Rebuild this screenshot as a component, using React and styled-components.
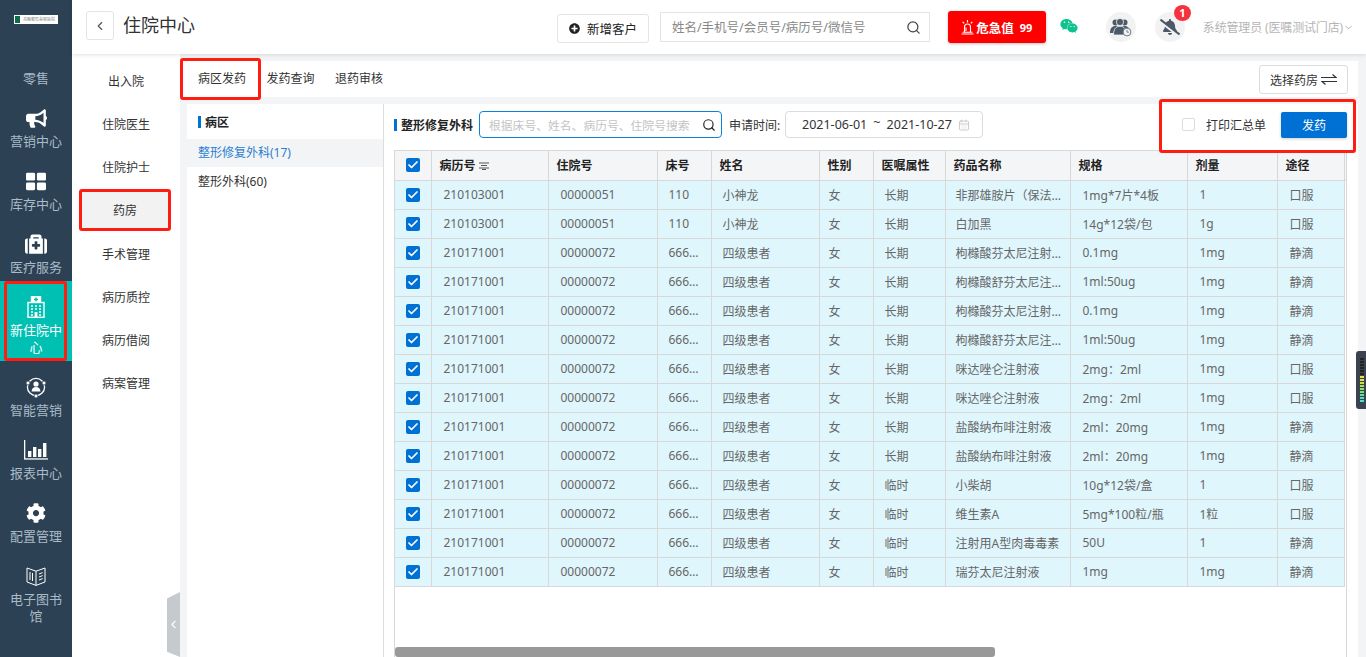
import React from 'react';
import styled, {createGlobalStyle} from 'styled-components';
import {ChevronLeft, ChevronDown, Search, CalendarDays, Check} from 'lucide-react';
import {FaBullhorn, FaMedkit, FaCog, FaWeixin, FaPlusCircle, FaBellSlash} from 'react-icons/fa';

const GlobalStyle = createGlobalStyle`
  html, body {
    margin: 0;
    padding: 0;
    height: 100%;
    overflow: hidden;
    background: #f3f4f6;
  }
  * {
    box-sizing: border-box;
  }
  body, input, button {
    font-family: 'Noto Sans', 'Noto Sans CJK SC', sans-serif;
  }
`;

const GridIcon = () => (
  <svg width="20" height="19" viewBox="0 0 22 19" fill="#fff">
    <rect x="0" y="0" width="10" height="8.5" rx="1.5" />
    <rect x="12" y="0" width="10" height="8.5" rx="1.5" />
    <rect x="0" y="10.5" width="10" height="8.5" rx="1.5" />
    <rect x="12" y="10.5" width="10" height="8.5" rx="1.5" />
  </svg>
);

const HospitalIcon = () => (
  <svg width="18" height="22" viewBox="0 0 18 22" fill="none" stroke="#fff" strokeWidth="1.4">
    <rect x="4.5" y="0.7" width="9" height="5.5" fill="#fff" />
    <path d="M9 1.5v4M7 3.5h4" stroke="#00bfb3" />
    <rect x="1" y="6.5" width="16" height="14.8" />
    <path d="M4 10h2M8 10h2M12 10h2M4 13h2M8 13h2M12 13h2M4 16h2M12 16h2M4 19h2M12 19h2" strokeWidth="1.6" />
    <rect x="7.6" y="16" width="2.8" height="5" fill="#fff" stroke="none" />
  </svg>
);

const SmartIcon = () => (
  <svg width="22" height="22" viewBox="0 0 22 22" fill="none" stroke="#fff" strokeWidth="1.3">
    <circle cx="11" cy="11" r="8.6" />
    <circle cx="11" cy="8" r="2.6" fill="#fff" stroke="none" />
    <path d="M6.5 15.5c.3-3 2-4.4 4.5-4.4s4.2 1.4 4.5 4.4z" fill="#fff" stroke="none" />
    <circle cx="3" cy="7" r="2" fill="#fff" stroke="#2c4153" strokeWidth="0.8" />
    <circle cx="19" cy="7" r="2" fill="#fff" stroke="#2c4153" strokeWidth="0.8" />
    <circle cx="11" cy="20" r="2" fill="#fff" stroke="#2c4153" strokeWidth="0.8" />
  </svg>
);

const ChartIcon = () => (
  <svg width="24" height="20" viewBox="0 0 24 20" fill="#fff">
    <rect x="0" y="0" width="1.3" height="19" />
    <rect x="0" y="18.3" width="24" height="1.3" />
    <rect x="4" y="11" width="3.4" height="6" />
    <rect x="9" y="7" width="3.4" height="10" />
    <rect x="14" y="9" width="3.4" height="8" />
    <rect x="19" y="3" width="3.4" height="14" />
  </svg>
);

const BookIcon = () => (
  <svg width="20" height="19" viewBox="0 0 20 19" fill="none" stroke="#fff" strokeWidth="1">
    <path d="M1 1l9 3.2L19 1v14l-9 3.4L1 15z" />
    <path d="M10 4.2v14.2M4 5v8M6.5 6v8M13 7l3.6-1.4M13 10l3.6-1.4M13 13l3.6-1.4" />
  </svg>
);

const AlarmIcon = () => (
  <svg width="13" height="15" viewBox="0 0 13 15" fill="none" stroke="#fff" strokeWidth="1.1">
    <path d="M3.5 12V7a3 3 0 0 1 6 0v5" />
    <path d="M5 11V7.5" />
    <path d="M0.5 14h12M1.5 12.3h10" />
    <path d="M6.5 0v2.4M1.6 1.8l1.6 1.6M11.4 1.8L9.8 3.4" />
  </svg>
);

const UsersClockIcon = () => (
  <svg width="22" height="20" viewBox="0 0 22 20">
    <circle cx="5.5" cy="5.5" r="3" fill="#4c5a68" />
    <circle cx="14.5" cy="5.5" r="3" fill="#4c5a68" />
    <path d="M0 16c0-4.5 2-7 5.5-7s5.5 2.5 5.5 7zM9 16c0-4.5 2-7 5.5-7s5.5 2.5 5.5 7z" fill="#4c5a68" />
    <circle cx="10" cy="5" r="3.6" fill="#4c5a68" stroke="#f2f2f2" strokeWidth="0.8" />
    <path d="M3.5 18c0-6 2.5-8.8 6.5-8.8s6.5 2.8 6.5 8.8z" fill="#4c5a68" stroke="#f2f2f2" strokeWidth="0.8" />
    <circle cx="17" cy="15" r="3.9" fill="#f2f2f2" stroke="#6f7b88" strokeWidth="1" />
    <path d="M17 12.8v2.4h1.9" fill="none" stroke="#6f7b88" strokeWidth="0.9" />
  </svg>
);

const SwapIcon = () => (
  <svg width="16" height="11" viewBox="0 0 16 11" fill="none" stroke="#333" strokeWidth="1.2">
    <path d="M0 3.5h15L11.5 0.5" />
    <path d="M16 7.5H1l3.5 3" />
  </svg>
);

const SortIcon = () => (
  <svg width="10" height="8" viewBox="0 0 10 8" fill="none" stroke="#555" strokeWidth="1">
    <path d="M0 1h10M2 3.5h6M0 6h10" />
    <path d="M3 7.5h4" />
  </svg>
);

const menus = [
  {label: '零售', retail: true},
  {label: '营销中心', icon: <FaBullhorn size={21} color="#fff" />},
  {label: '库存中心', icon: <GridIcon />},
  {label: '医疗服务', icon: <FaMedkit size={22} color="#fff" />},
  {label: '新住院中心', icon: <HospitalIcon />, active: true},
  {label: '智能营销', icon: <SmartIcon />},
  {label: '报表中心', icon: <ChartIcon />},
  {label: '配置管理', icon: <FaCog size={20} color="#fff" />},
  {label: '电子图书馆', icon: <BookIcon />},
];

const subMenus = ['出入院', '住院医生', '住院护士', '药房', '手术管理', '病历质控', '病历借阅', '病案管理'];

const columns = [
  {title: '病历号', width: 117, sort: true},
  {title: '住院号', width: 109},
  {title: '床号', width: 54},
  {title: '姓名', width: 108},
  {title: '性别', width: 54},
  {title: '医嘱属性', width: 72},
  {title: '药品名称', width: 125},
  {title: '规格', width: 117},
  {title: '剂量', width: 90},
  {title: '途径', width: 67},
];

const row = (no, inNo, bed, name, kind, drug, spec, dose, route) => ({no, inNo, bed, name, kind, drug, spec, dose, route});

const rows = [
  row('210103001', '00000051', '110', '小神龙', '长期', '非那雄胺片（保法止）', '1mg*7片*4板', '1', '口服'),
  row('210103001', '00000051', '110', '小神龙', '长期', '白加黑', '14g*12袋/包', '1g', '口服'),
  row('210171001', '00000072', '666666', '四级患者', '长期', '枸橼酸芬太尼注射液', '0.1mg', '1mg', '静滴'),
  row('210171001', '00000072', '666666', '四级患者', '长期', '枸橼酸舒芬太尼注射液', '1ml:50ug', '1mg', '静滴'),
  row('210171001', '00000072', '666666', '四级患者', '长期', '枸橼酸芬太尼注射液', '0.1mg', '1mg', '静滴'),
  row('210171001', '00000072', '666666', '四级患者', '长期', '枸橼酸舒芬太尼注射液', '1ml:50ug', '1mg', '静滴'),
  row('210171001', '00000072', '666666', '四级患者', '长期', '咪达唑仑注射液', '2mg：2ml', '1mg', '口服'),
  row('210171001', '00000072', '666666', '四级患者', '长期', '咪达唑仑注射液', '2mg：2ml', '1mg', '口服'),
  row('210171001', '00000072', '666666', '四级患者', '长期', '盐酸纳布啡注射液', '2ml：20mg', '1mg', '静滴'),
  row('210171001', '00000072', '666666', '四级患者', '长期', '盐酸纳布啡注射液', '2ml：20mg', '1mg', '静滴'),
  row('210171001', '00000072', '666666', '四级患者', '临时', '小柴胡', '10g*12袋/盒', '1', '口服'),
  row('210171001', '00000072', '666666', '四级患者', '临时', '维生素A', '5mg*100粒/瓶', '1粒', '口服'),
  row('210171001', '00000072', '666666', '四级患者', '临时', '注射用A型肉毒毒素', '50U', '1', '静滴'),
  row('210171001', '00000072', '666666', '四级患者', '临时', '瑞芬太尼注射液', '1mg', '1mg', '静滴'),
];

const levels = ['#222', '#222', '#222', '#222', '#222', '#222', '#e8e04a', '#e4e04a', '#c4e04a', '#a8e050', '#90e060', '#70e080', '#60e0a0', '#50e0b8', '#50e0c8'];

const Checked = () => (
  <CheckBox>
    <Check size={12} color="#fff" strokeWidth={3.5} />
  </CheckBox>
);

export default function App() {
  return (
    <>
      <GlobalStyle />
      <Page>
        <Sidebar>
          <Logo>
            <LogoMark />
            <LogoText>鸿雁整形美容医院</LogoText>
          </Logo>
          {menus.map(item => (
            <MenuItem key={item.label} $active={item.active} $retail={item.retail}>
              {item.icon && <MenuIcon>{item.icon}</MenuIcon>}
              <MenuLabel $active={item.active}>{item.label}</MenuLabel>
              {item.active && <MenuMark />}
            </MenuItem>
          ))}
        </Sidebar>
        <Main>
          <Header>
            <BackButton>
              <ChevronLeft size={14} color="#555" />
            </BackButton>
            <Title>住院中心</Title>
            <AddButton>
              <FaPlusCircle size={11} color="#222" />
              新增客户
            </AddButton>
            <SearchBox>
              <SearchInput readOnly placeholder="姓名/手机号/会员号/病历号/微信号" />
              <Search size={15} color="#444" />
            </SearchBox>
            <AlarmButton>
              <AlarmIcon />
              危急值
              <AlarmCount>99</AlarmCount>
            </AlarmButton>
            <WechatSlot>
              <FaWeixin size={18} color="#0cc38f" />
            </WechatSlot>
            <RoundIcon>
              <UsersClockIcon />
            </RoundIcon>
            <RoundIcon $bell>
              <FaBellSlash size={20} color="#4c5a68" />
              <Badge>1</Badge>
            </RoundIcon>
            <UserName>系统管理员 (医嘱测试门店)</UserName>
            <ChevronDown size={11} color="#aaa" />
          </Header>
          <Body>
            <SubNav>
              {subMenus.map(name => (
                <SubItem key={name} $active={name === '药房'}>
                  {name}
                  {name === '药房' && <SubMark />}
                </SubItem>
              ))}
              <Collapse>
                <ChevronLeft size={15} color="#fff" />
              </Collapse>
            </SubNav>
            <Content>
              <TabBar>
                <Tab>
                  病区发药
                  <TabMark />
                </Tab>
                <Tab>发药查询</Tab>
                <Tab>退药审核</Tab>
                <PharmacyButton>
                  选择药房
                  <SwapIcon />
                </PharmacyButton>
              </TabBar>
              <Panels>
                <WardPanel>
                  <SectionTitle>
                    <Bar />
                    病区
                  </SectionTitle>
                  <WardRow $active>整形修复外科(17)</WardRow>
                  <WardRow>整形外科(60)</WardRow>
                </WardPanel>
                <DrugPanel>
                  <Toolbar>
                    <ToolTitle>
                      <Bar />
                      整形修复外科
                    </ToolTitle>
                    <FilterBox>
                      <FilterInput readOnly placeholder="根据床号、姓名、病历号、住院号搜索" />
                      <Search size={14} color="#222" />
                    </FilterBox>
                    <DateLabel>申请时间:</DateLabel>
                    <DateBox>
                      <span>2021-06-01</span>
                      <Tilde>~</Tilde>
                      <span>2021-10-27</span>
                      <CalendarDays size={12} color="#ccc" />
                    </DateBox>
                    <PrintArea>
                      <EmptyCheck />
                      <PrintLabel>打印汇总单</PrintLabel>
                      <SendButton>发药</SendButton>
                      <PrintMark />
                    </PrintArea>
                  </Toolbar>
                  <TableBox>
                    <TableScroll>
                      <Table>
                        <colgroup>
                          <col style={{width: 36}} />
                          {columns.map(c => (
                            <col key={c.title} style={{width: c.width}} />
                          ))}
                          <col style={{width: 2}} />
                        </colgroup>
                        <thead>
                          <tr>
                            <CheckHead>
                              <Checked />
                            </CheckHead>
                            {columns.map(c => (
                              <HeadCell key={c.title}>
                                {c.title}
                                {c.sort && (
                                  <SortSlot>
                                    <SortIcon />
                                  </SortSlot>
                                )}
                              </HeadCell>
                            ))}
                            <HeadCell />
                          </tr>
                        </thead>
                        <tbody>
                          {rows.map((r, i) => (
                            <tr key={i}>
                              <CheckCell>
                                <Checked />
                              </CheckCell>
                              <Cell>{r.no}</Cell>
                              <Cell>{r.inNo}</Cell>
                              <Cell $pad={11}>{r.bed}</Cell>
                              <Cell $pad={11}>{r.name}</Cell>
                              <Cell $pad={9}>女</Cell>
                              <Cell $pad={11}>{r.kind}</Cell>
                              <Cell $pad={10}>{r.drug}</Cell>
                              <Cell>{r.spec}</Cell>
                              <Cell>{r.dose}</Cell>
                              <Cell>{r.route}</Cell>
                            </tr>
                          ))}
                        </tbody>
                      </Table>
                    </TableScroll>
                    <ScrollTrack>
                      <ScrollThumb />
                    </ScrollTrack>
                  </TableBox>
                </DrugPanel>
              </Panels>
            </Content>
          </Body>
        </Main>
        <FloatWidget>
          {levels.map((c, i) => (
            <Level key={i} style={{background: c}} />
          ))}
        </FloatWidget>
      </Page>
    </>
  );
}

const Page = styled.div`
  position: relative;
  display: flex;
  width: 1366px;
  height: 657px;
  overflow: hidden;
`;

const Sidebar = styled.aside`
  flex: 0 0 72px;
  background: #2c4153;
`;

const Logo = styled.div`
  height: 54px;
  padding: 15px 14px 0;
  display: flex;
  align-items: flex-start;
`;

const LogoMark = styled.div`
  width: 7px;
  height: 9px;
  background: #0f6b50;
  border: 1px solid #fff;
`;

const LogoText = styled.div`
  width: 37px;
  height: 9px;
  background: #fff;
  color: #888;
  font-size: 4px;
  line-height: 9px;
  white-space: nowrap;
  overflow: hidden;
  padding-left: 2px;
`;

const MenuItem = styled.div`
  position: relative;
  padding: ${p => (p.$retail ? '16px 6px 5px' : '13px 6px 5px')};
  background: ${p => (p.$active ? '#00bfb3' : 'transparent')};
  text-align: center;
`;

const MenuIcon = styled.div`
  height: 26px;
  margin-bottom: 2px;
  display: flex;
  align-items: center;
  justify-content: center;
`;

const MenuLabel = styled.div`
  font-size: 13px;
  line-height: 17px;
  color: ${p => (p.$active ? '#fff' : '#a9bac8')};
`;

const MenuMark = styled.div`
  position: absolute;
  left: 4px;
  top: 0;
  width: 63px;
  height: 80px;
  border: 3px solid #ff1c10;
  border-radius: 3px;
`;

const Main = styled.div`
  flex: 1;
  min-width: 0;
  display: flex;
  flex-direction: column;
`;

const Header = styled.header`
  flex: 0 0 54px;
  position: relative;
  z-index: 1;
  display: flex;
  align-items: center;
  padding: 0 12px 0 14px;
  background: #fff;
  box-shadow: 0 1px 4px rgba(0, 0, 0, 0.12);
`;

const BackButton = styled.div`
  width: 28px;
  height: 29px;
  margin-bottom: 3px;
  display: flex;
  align-items: center;
  justify-content: center;
  border: 1px solid #e4e4e4;
  border-radius: 3px;
`;

const Title = styled.div`
  width: 434px;
  margin: 0 0 4px 9px;
  font-size: 18px;
  line-height: 24px;
  color: #333;
`;

const AddButton = styled.div`
  width: 92px;
  height: 29px;
  margin-bottom: -2px;
  display: flex;
  align-items: center;
  justify-content: center;
  gap: 7px;
  border: 1px solid #e4e4e4;
  border-radius: 3px;
  font-size: 12.5px;
  color: #222;
`;

const SearchBox = styled.div`
  width: 270px;
  height: 30px;
  margin-left: 11px;
  padding: 0 8px 0 11px;
  display: flex;
  align-items: center;
  justify-content: space-between;
  border: 1px solid #e4e4e4;
`;

const SearchInput = styled.input`
  width: 230px;
  border: none;
  outline: none;
  padding: 0;
  font-size: 12.5px;
  &::placeholder {
    color: #888;
  }
`;

const AlarmButton = styled.div`
  width: 98px;
  height: 32px;
  margin-left: 18px;
  display: flex;
  align-items: center;
  justify-content: center;
  gap: 2px;
  background: #ff0000;
  border-radius: 3px;
  box-shadow: 0 1px 3px rgba(0, 0, 0, 0.25);
  color: #fff;
  font-size: 12.5px;
  font-weight: 700;
`;

const AlarmCount = styled.span`
  margin-left: 4px;
  font-size: 11px;
`;

const WechatSlot = styled.div`
  width: 46px;
  margin-left: 14px;
  padding-bottom: 2px;
  display: flex;
`;

const RoundIcon = styled.div`
  position: relative;
  width: 30px;
  height: 30px;
  margin-left: ${p => (p.$bell ? '19px' : '0')};
  display: flex;
  align-items: center;
  justify-content: center;
  border-radius: 50%;
  background: #f2f2f2;
`;

const Badge = styled.span`
  position: absolute;
  top: -7px;
  right: -6px;
  width: 17px;
  height: 16px;
  border-radius: 50%;
  background: #f5333f;
  color: #fff;
  font-size: 11px;
  font-weight: 700;
  line-height: 16px;
  text-align: center;
`;

const UserName = styled.div`
  margin-left: 3px;
  padding-left: 15px;
  font-size: 12px;
  letter-spacing: -0.15px;
  color: #b5b5b5;
  white-space: nowrap;
`;

const Body = styled.div`
  flex: 1;
  min-height: 0;
  display: flex;
`;

const SubNav = styled.nav`
  position: relative;
  flex: 0 0 108px;
  padding-top: 5px;
  background: #fff;
`;

const SubItem = styled.div`
  position: relative;
  height: ${p => (p.$active ? '36px' : '43px')};
  margin: ${p => (p.$active ? '4px 11px 4px 9px' : '0')};
  background: ${p => (p.$active ? '#f2f2f2' : 'transparent')};
  display: flex;
  align-items: center;
  justify-content: center;
  font-size: 12px;
  color: #333;
`;

const SubMark = styled.div`
  position: absolute;
  inset: -3px -2px;
  border: 3px solid #ff1c10;
  border-radius: 3px;
`;

const Collapse = styled.div`
  position: absolute;
  right: 0;
  bottom: 0;
  width: 13px;
  height: 65px;
  display: flex;
  align-items: center;
  justify-content: center;
  background: #c5cacf;
  clip-path: polygon(100% 0, 100% 100%, 0 92%, 0 10%);
`;

const Content = styled.div`
  flex: 1;
  min-width: 0;
  padding: 7px 8px 0 0;
  display: flex;
  flex-direction: column;
`;

const TabBar = styled.div`
  flex: 0 0 36px;
  display: flex;
  align-items: center;
  background: #fff;
  padding-left: 18px;
`;

const Tab = styled.div`
  position: relative;
  margin: 0 20.5px 2px 0;
  font-size: 12px;
  color: #333;
`;

const TabMark = styled.div`
  position: absolute;
  left: -18px;
  top: -11px;
  width: 81px;
  height: 42px;
  border: 3px solid #ff1c10;
  border-radius: 3px;
`;

const PharmacyButton = styled.div`
  width: 89px;
  height: 29px;
  margin: 1px 10px 0 auto;
  display: flex;
  align-items: center;
  justify-content: center;
  gap: 3px;
  border: 1px solid #dcdcdc;
  border-radius: 3px;
  font-size: 12px;
  color: #333;
`;

const Panels = styled.div`
  flex: 1;
  min-height: 0;
  margin: 7px 0 0 7px;
  display: flex;
  background: #fff;
`;

const WardPanel = styled.div`
  flex: 0 0 197px;
  border-right: 1px solid #ddd;
`;

const SectionTitle = styled.div`
  height: 35px;
  padding-left: 11px;
  display: flex;
  align-items: center;
  gap: 4px;
  font-size: 12px;
  font-weight: 700;
  color: #222;
`;

const Bar = styled.span`
  width: 3px;
  height: 12px;
  background: #0072d6;
`;

const WardRow = styled.div`
  height: 28px;
  margin-bottom: 1px;
  padding: 0 0 3px 11px;
  display: flex;
  align-items: center;
  font-size: 12px;
  background: ${p => (p.$active ? '#f3f4f6' : 'transparent')};
  color: ${p => (p.$active ? '#2a7fd0' : '#333')};
`;

const DrugPanel = styled.div`
  flex: 1;
  min-width: 0;
  padding: 0 11px 0 10px;
  display: flex;
  flex-direction: column;
`;

const Toolbar = styled.div`
  flex: 0 0 46px;
  display: flex;
  align-items: center;
  padding-bottom: 5px;
`;

const ToolTitle = styled.div`
  display: flex;
  align-items: center;
  gap: 4px;
  width: 85px;
  font-size: 12px;
  font-weight: 700;
  color: #222;
  white-space: nowrap;
`;

const FilterBox = styled.div`
  width: 243px;
  height: 27px;
  padding: 0 5px 0 9px;
  display: flex;
  align-items: center;
  justify-content: space-between;
  border: 1px solid #0a84d8;
  border-radius: 4px;
`;

const FilterInput = styled.input`
  width: 212px;
  border: none;
  outline: none;
  padding: 0;
  font-size: 11.8px;
  &::placeholder {
    color: #c4c4c4;
  }
`;

const DateLabel = styled.div`
  width: 56px;
  margin-left: 7px;
  font-size: 12px;
  color: #333;
`;

const DateBox = styled.div`
  width: 198px;
  height: 27px;
  padding: 0 12px 0 16px;
  display: flex;
  align-items: center;
  justify-content: space-between;
  border: 1px solid #dcdcdc;
  border-radius: 4px;
  font-size: 12.5px;
  color: #333;
`;

const Tilde = styled.span`
  margin-top: -4px;
`;

const PrintArea = styled.div`
  position: relative;
  margin-left: auto;
  display: flex;
  align-items: center;
`;

const EmptyCheck = styled.div`
  width: 13px;
  height: 13px;
  border: 1px solid #dcdcdc;
  border-radius: 2px;
`;

const PrintLabel = styled.div`
  margin: 0 15px 0 11px;
  font-size: 12px;
  color: #333;
`;

const SendButton = styled.div`
  width: 66px;
  height: 26px;
  display: flex;
  align-items: center;
  justify-content: center;
  background: #0071d4;
  border-radius: 2px;
  box-shadow: 0 1px 3px rgba(0, 0, 0, 0.2);
  color: #fff;
  font-size: 12px;
`;

const PrintMark = styled.div`
  position: absolute;
  left: -23px;
  top: -13px;
  width: 197px;
  height: 54px;
  border: 3px solid #ff1c10;
  border-radius: 3px;
`;

const TableBox = styled.div`
  flex: 1;
  min-height: 0;
  display: flex;
  flex-direction: column;
  border: 1px solid #d8d8d8;
  border-bottom: none;
`;

const TableScroll = styled.div`
  flex: 1;
  min-height: 0;
  overflow: hidden;
`;

const Table = styled.table`
  width: 951px;
  table-layout: fixed;
  border-collapse: collapse;
`;

const HeadCell = styled.th`
  height: 29px;
  padding: 0 0 0 8px;
  background: #f4f5f7;
  border-right: 1px solid #d8d8d8;
  border-bottom: 1px solid #d8d8d8;
  font-size: 12px;
  font-weight: 700;
  color: #222;
  text-align: left;
`;

const CheckHead = styled(HeadCell)`
  padding: 0;
`;

const SortSlot = styled.span`
  margin-left: 3px;
`;

const Cell = styled.td`
  height: 29px;
  padding: 0 8px 0 ${p => p.$pad || 12}px;
  background: #dff6fd;
  border-right: 1px solid #d8d8d8;
  border-bottom: 1px solid #d8d8d8;
  font-size: 12px;
  color: #666;
  white-space: nowrap;
  overflow: hidden;
  text-overflow: ellipsis;
`;

const CheckCell = styled(Cell)`
  padding: 0;
`;

const CheckBox = styled.div`
  width: 14px;
  height: 14px;
  margin: 0 auto;
  display: flex;
  align-items: center;
  justify-content: center;
  background: #0071d4;
  border-radius: 2px;
`;

const ScrollTrack = styled.div`
  flex: 0 0 10px;
`;

const ScrollThumb = styled.div`
  width: 600px;
  height: 10px;
  background: #999;
  border-radius: 3px;
`;

const FloatWidget = styled.div`
  position: absolute;
  right: 0;
  top: 351px;
  width: 10px;
  height: 58px;
  padding: 7px 2px 0 4px;
  background: #3c4350;
  border-radius: 3px 0 0 3px;
  display: flex;
  flex-direction: column;
  gap: 1px;
`;

const Level = styled.div`
  height: 2px;
`;
